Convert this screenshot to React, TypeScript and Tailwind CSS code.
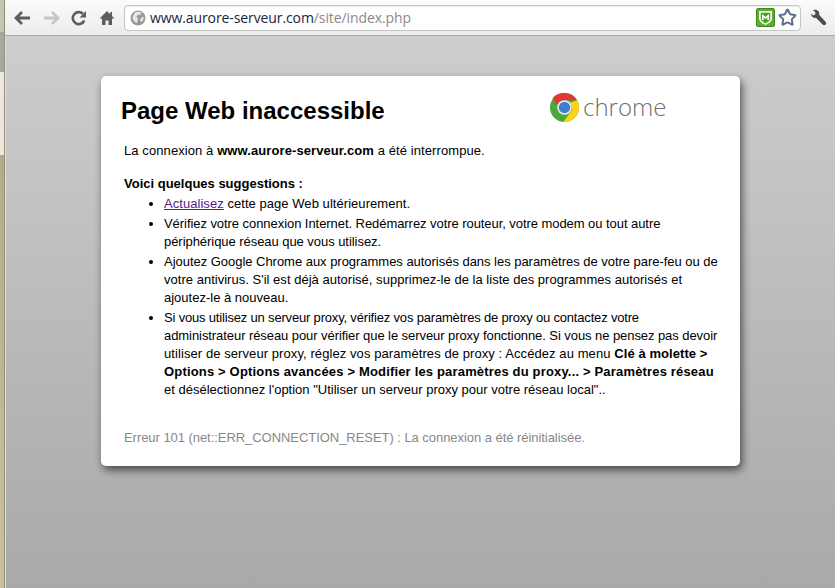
import React from 'react';
import { Star } from 'lucide-react';

const ChromeLogo = () => (
	<svg width="29" height="29" viewBox="0 0 48 48">
		<circle cx="24" cy="24" r="24" fill="#4aa63d" />
		<path d="M24 0a24 24 0 0 1 20.8 12H24a12 12 0 0 0-11.4 8.2L4.2 8.8A24 24 0 0 1 24 0z" fill="#dc3a32" />
		<path d="M44.8 12A24 24 0 0 1 22 48l10.6-14.6A12 12 0 0 0 33 16z" fill="#fcd118" />
		<circle cx="24" cy="24" r="12" fill="#f0f0f0" />
		<circle cx="24" cy="24" r="9.500" fill="#3f7fcb" />
	</svg>
);

const ShieldBadge = () => (
	<div className="flex h-[19px] w-[19px] items-center justify-center rounded-[2px] border border-[#3c8a1c] bg-[#5cae2e]">
		<svg width="15" height="16" viewBox="0 0 15 16">
			<path d="M1 1h13v7.500c0 3-3.500 5.200-6.500 6.500C4.500 13.700 1 11.500 1 8.500z" fill="#eef6e8" />
			<path d="M2.800 2.800h9.400v5.700c0 2-2.700 3.800-4.700 4.800-2-1-4.700-2.800-4.700-4.800z" fill="#4d9e27" />
			<path d="M4 10V4l3.500 3L11 4v6H9.300V7.300L7.500 9 5.700 7.300V10z" fill="#fff" />
		</svg>
	</div>
);

const App = () => {
	return (
		<div className="flex h-[588px] w-[835px] overflow-hidden bg-[#ccc] font-['Liberation_Sans',Arial,sans-serif]">
			{/* window frame */}
			<div className="flex w-[5px] shrink-0 flex-col border-r border-[#8f8c78]">
				<div className="h-[32px] bg-[#c6c4b4]" />
				<div className="h-[40px] bg-[#a9a89c]" />
				<div className="h-[83px] bg-[#ece8dc]" />
				<div className="flex-1 bg-gradient-to-b from-[#b3ab8c] to-[#cbc0a2]" />
			</div>
			<div className="flex min-w-0 flex-1 flex-col">
				<div className="flex h-[36px] shrink-0 items-center border-b border-[#a8a8b0] bg-gradient-to-b from-[#fbfbfb] to-[#ececec] pl-[9px]">
					<div className="flex items-center gap-[11px]">
						<svg width="17" height="16" viewBox="0 0 17 16">
							<path d="M8 2 2 8l6 6M2.500 8H16" fill="none" stroke="#5c5c5c" strokeWidth="2.800" />
						</svg>
						<svg width="17" height="16" viewBox="0 0 17 16" className="ml-[1px]">
							<path d="m9 2 6 6-6 6M14.500 8H1" fill="none" stroke="#c6c6c6" strokeWidth="2.800" />
						</svg>
						<svg width="16" height="16" viewBox="0 0 16 16">
							<path d="M13.300 10.500A6 6 0 1 1 12 3.800" fill="none" stroke="#5c5c5c" strokeWidth="2.600" />
							<path d="M15 1v6.500H8.500z" fill="#5c5c5c" />
						</svg>
						<svg width="16" height="16" viewBox="0 0 16 16" className="ml-[1px]">
							<path d="M8 1 0.500 8.500H3V15h3.500v-4.500h3V15H13V8.500h2.500L13 6V2h-1.800v2.200z" fill="#5c5c5c" />
						</svg>
					</div>
					<div className="ml-[9px] flex h-[26px] w-[677px] items-center rounded-[4px] border border-[#c4c4c4] bg-white pl-[5px] pr-[3px] shadow-[inset_0_1px_1px_rgba(0,0,0,0.08)]">
						<svg width="16" height="16" viewBox="0 0 16 16">
							<circle cx="8" cy="8" r="7.500" fill="#9a9a9a" />
							<path d="M5 2.500c2-1 5-1 6.500.500L10 5 8 4.500 6.500 6.500 8 9l-1 4C4 12 2.500 9.500 2.500 7z" fill="#e8e8e8" />
							<path d="M11 8l2.500-1.500c.5 2-.5 4-2 5.500L10 10.500z" fill="#e8e8e8" />
						</svg>
						<div className="ml-[4px] flex-1 text-[14px] tracking-[-0.1px] font-['Open_Sans',sans-serif]">
							<span className="text-[#1b2440]">www.aurore-serveur.com</span>
							<span className="text-[#8a8a8a]">/site/index.php</span>
						</div>
						<ShieldBadge />
						<Star size={19} strokeWidth={2.600} className="ml-[3px] text-[#5f7090]" />
					</div>
					<svg width="17" height="17" viewBox="0 0 17 17" className="ml-[9px]">
						<path d="M1 4.500 3.200 6.600 5.500 5 5 2.800 3 1.200C5 .3 7.300.7 8.500 2.200c.8 1 1 2.300.6 3.500l6.500 7.300c.8 1 .5 2-.2 2.600s-1.700.8-2.600 0L6 8.800C4 9.300 1 8 1 4.500z" fill="#4d4d4d" />
						<path d="M7.500 7.500 14.200 14.200" stroke="#4d4d4d" strokeWidth="3.600" strokeLinecap="round" />
					</svg>
				</div>
				<div className="flex flex-1 justify-center border-l border-[#e2e2e2] bg-gradient-to-b from-[#cdcdcd] to-[#a9a9a9] pt-[40px]">
					<div className="h-[390px] w-[639px] rounded-[5px] bg-white px-[20px] text-[13px] leading-[18px] text-black shadow-[2px_4px_8px_rgba(0,0,0,0.6)]">
						<div className="flex h-[50px] items-end">
							<h1 className="w-[429px] text-[24px] leading-[30px] font-bold">Page Web inaccessible</h1>
							<div className="mb-[4px] flex items-center">
								<ChromeLogo />
								<span className="ml-[4px] font-['Open_Sans',sans-serif] text-[24px] leading-[30px] font-light text-[#6f7174]">chrome</span>
							</div>
						</div>
						<div className="pl-[3px]">
							<p className="mt-[16px] tracking-[0.09px]">
								La connexion à <b>www.aurore-serveur.com</b> a été interrompue.
							</p>
							<p className="mt-[15px] font-bold">Voici quelques suggestions :</p>
							<ul className="mt-[2px] list-disc whitespace-nowrap pl-[40px]">
								<li className="mb-[2px] tracking-[0.05px]">
									<a href="#" className="text-[#551a8b] underline">Actualisez</a> cette page Web ultérieurement.
								</li>
								<li className="mb-[2px]">
									<span className="block tracking-[-0.06px]">Vérifiez votre connexion Internet. Redémarrez votre routeur, votre modem ou tout autre</span>
									<span className="block tracking-[-0.05px]">périphérique réseau que vous utilisez.</span>
								</li>
								<li className="mb-[2px]">
									<span className="block tracking-[-0.03px]">Ajoutez Google Chrome aux programmes autorisés dans les paramètres de votre pare-feu ou de</span>
									<span className="block tracking-[0.02px]">votre antivirus. S'il est déjà autorisé, supprimez-le de la liste des programmes autorisés et</span>
									<span className="block">ajoutez-le à nouveau.</span>
								</li>
								<li>
									<span className="block tracking-[-0.18px]">Si vous utilisez un serveur proxy, vérifiez vos paramètres de proxy ou contactez votre</span>
									<span className="block tracking-[-0.07px]">administrateur réseau pour vérifier que le serveur proxy fonctionne. Si vous ne pensez pas devoir</span>
									<span className="block tracking-[0.08px]">utiliser de serveur proxy, réglez vos paramètres de proxy : Accédez au menu <b>Clé à molette &gt;</b></span>
									<b className="block tracking-[0.17px]">Options &gt; Options avancées &gt; Modifier les paramètres du proxy... &gt; Paramètres réseau</b>
									<span className="block">et désélectionnez l'option "Utiliser un serveur proxy pour votre réseau local"..</span>
								</li>
							</ul>
							<p className="mt-[30px] tracking-[-0.05px] text-[#888]">Erreur 101 (net::ERR_CONNECTION_RESET) : La connexion a été réinitialisée.</p>
						</div>
					</div>
				</div>
			</div>
		</div>
	);
};

export default App;
